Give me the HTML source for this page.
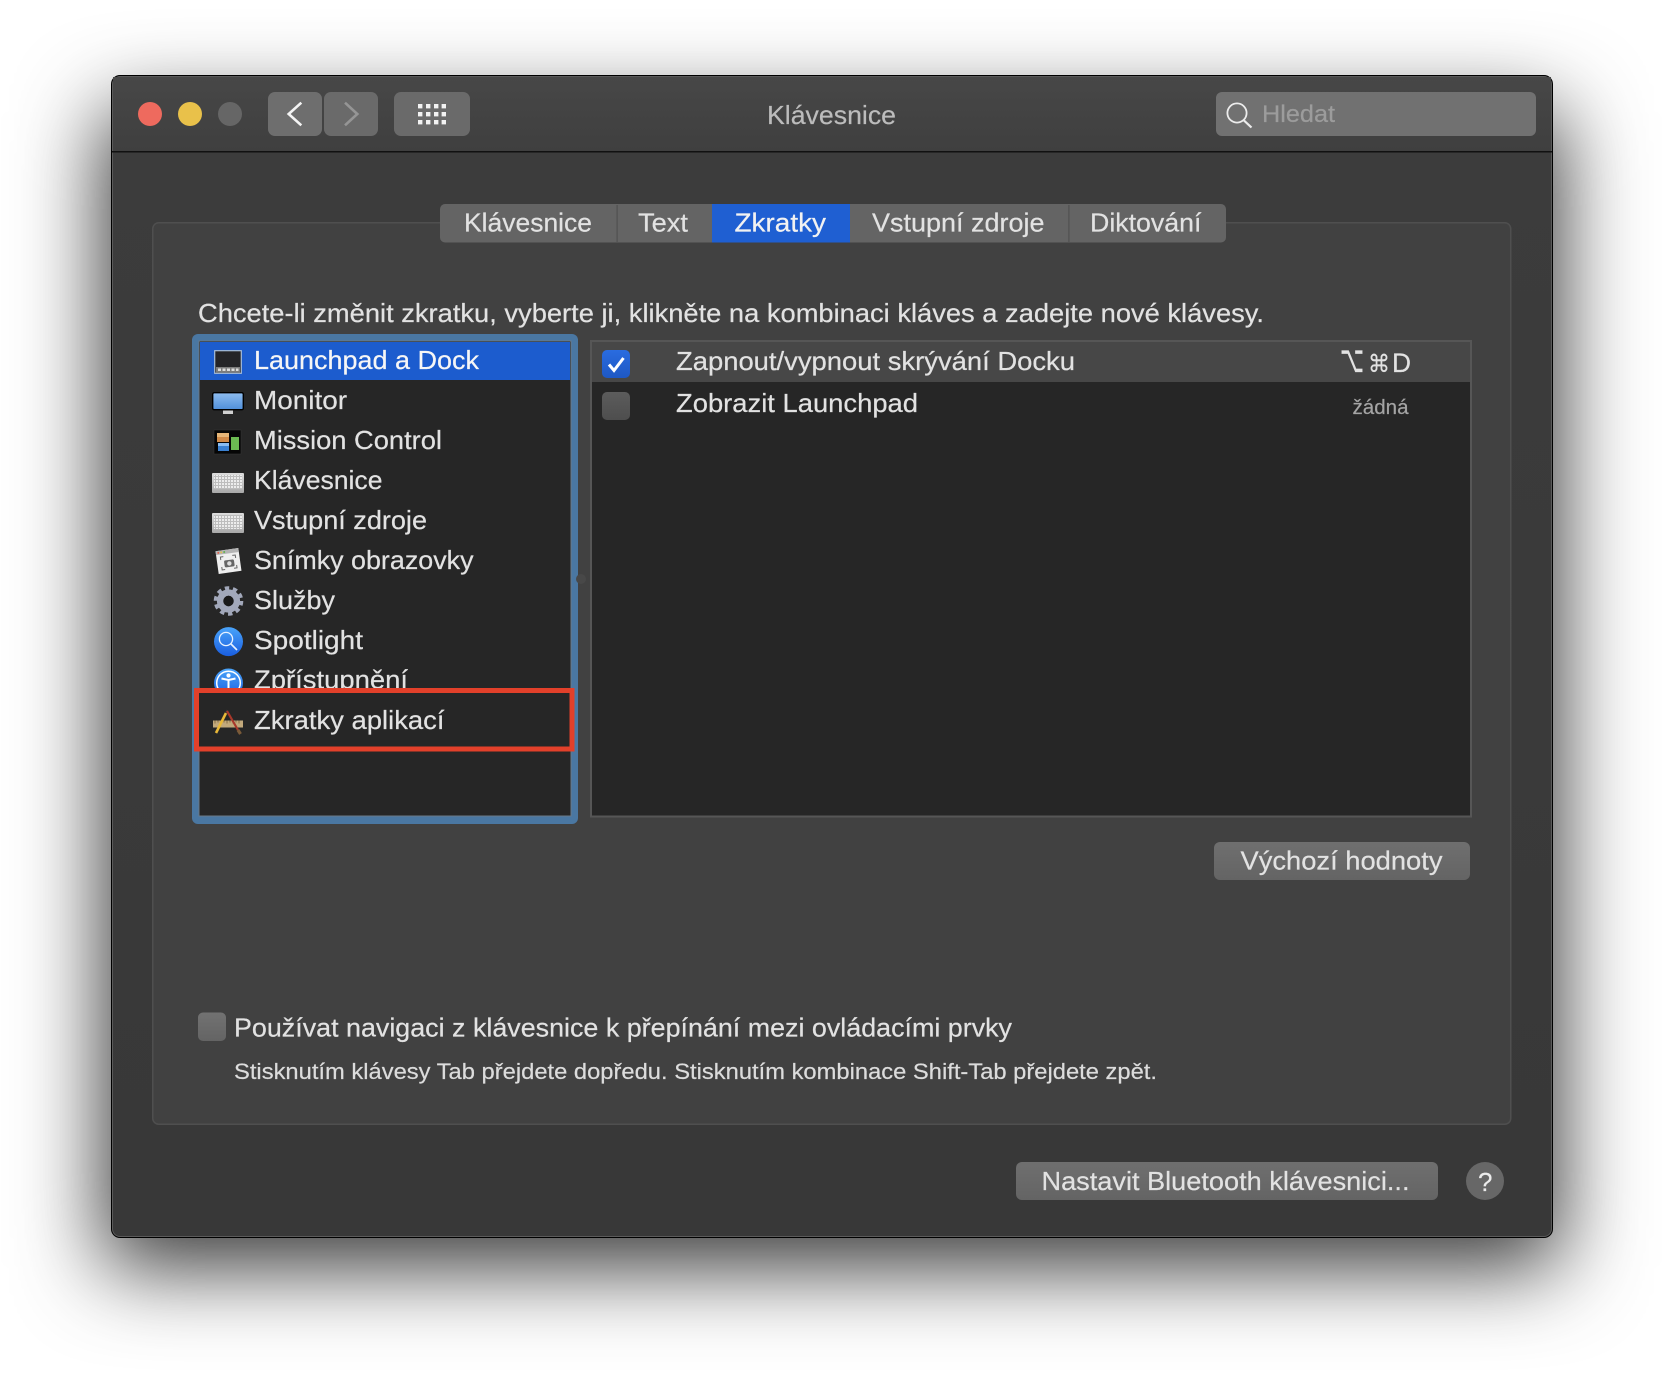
<!DOCTYPE html>
<html lang="cs">
<head>
<meta charset="utf-8">
<title>Klávesnice</title>
<style>
html,body{margin:0;padding:0;background:#fff;width:1664px;height:1386px;overflow:hidden}
#sh{position:absolute;left:-2897px;top:111px;width:1457px;height:1157px;border-radius:10px;box-shadow:3000px 0 85px rgba(0,0,0,.78)}
svg{position:absolute;left:0;top:0}
text{font-family:"Liberation Sans",sans-serif;font-size:26px;fill:#e2e2e2;stroke:#e2e2e2;stroke-width:.2}
</style>
</head>
<body>
<div id="sh"></div>
<svg width="1664" height="1386" viewBox="0 0 1664 1386" xmlns="http://www.w3.org/2000/svg">
<defs>
<linearGradient id="tb" x1="0" y1="0" x2="0" y2="1"><stop offset="0" stop-color="#474747"/><stop offset="1" stop-color="#3f3f3f"/></linearGradient>
<linearGradient id="bd" x1="0" y1="0" x2="0" y2="1"><stop offset="0" stop-color="#3c3c3c"/><stop offset="1" stop-color="#383838"/></linearGradient>
<linearGradient id="btn" x1="0" y1="0" x2="0" y2="1"><stop offset="0" stop-color="#6f6f6f"/><stop offset="1" stop-color="#646464"/></linearGradient>
<linearGradient id="chk" x1="0" y1="0" x2="0" y2="1"><stop offset="0" stop-color="#2a6ce0"/><stop offset="1" stop-color="#1e58c4"/></linearGradient>
<linearGradient id="off" x1="0" y1="0" x2="0" y2="1"><stop offset="0" stop-color="#5c5c5c"/><stop offset="1" stop-color="#4e4e4e"/></linearGradient>
<linearGradient id="off2" x1="0" y1="0" x2="0" y2="1"><stop offset="0" stop-color="#727272"/><stop offset="1" stop-color="#646464"/></linearGradient>
<linearGradient id="mon" x1="0" y1="0" x2="0" y2="1"><stop offset="0" stop-color="#8fbdf0"/><stop offset="1" stop-color="#4f8fda"/></linearGradient>
<linearGradient id="key" x1="0" y1="0" x2="0" y2="1"><stop offset="0" stop-color="#dcdcdc"/><stop offset="1" stop-color="#a8a8a8"/></linearGradient>
<linearGradient id="sp" x1="0" y1="0" x2="0" y2="1"><stop offset="0" stop-color="#4aa4fa"/><stop offset="1" stop-color="#1a5ee0"/></linearGradient>
<pattern id="keys" width="3" height="3" patternUnits="userSpaceOnUse"><rect width="3" height="3" fill="#bdbdbd"/><rect width="2" height="2" fill="#ececec"/></pattern>
</defs>

<!-- window -->
<rect x="111" y="75" width="1442" height="1163" rx="9" fill="#000"/>
<rect x="112" y="76" width="1440" height="1161" rx="8" fill="#5a5a5a"/>
<rect x="113" y="77" width="1438" height="1159" rx="7" fill="url(#bd)"/>
<rect x="113" y="77" width="1438" height="74" fill="url(#tb)"/>
<rect x="112" y="151" width="1440" height="1.5" fill="#111"/>

<!-- traffic lights -->
<circle cx="150" cy="114" r="12" fill="#ee6a5e"/>
<circle cx="190" cy="114" r="12" fill="#e9c14a"/>
<circle cx="230" cy="114" r="12" fill="#666"/>

<!-- nav -->
<rect x="268" y="92" width="54" height="44" rx="7" fill="#6e6e6e"/>
<rect x="324" y="92" width="54" height="44" rx="7" fill="#6a6a6a"/>
<path d="M301.3 102.7L288.7 114L301.3 125.3" fill="none" stroke="#f4f4f4" stroke-width="2.6"/>
<path d="M345 102.7L357.3 114L345 125.3" fill="none" stroke="#959595" stroke-width="2.6"/>
<rect x="394" y="92" width="76" height="44" rx="7" fill="#6a6a6a"/>
<g fill="#f2f2f2">
<rect x="418" y="104" width="4.4" height="4.4"/><rect x="426" y="104" width="4.4" height="4.4"/><rect x="434" y="104" width="4.4" height="4.4"/><rect x="441.6" y="104" width="4.4" height="4.4"/>
<rect x="418" y="112" width="4.4" height="4.4"/><rect x="426" y="112" width="4.4" height="4.4"/><rect x="434" y="112" width="4.4" height="4.4"/><rect x="441.6" y="112" width="4.4" height="4.4"/>
<rect x="418" y="120" width="4.4" height="4.4"/><rect x="426" y="120" width="4.4" height="4.4"/><rect x="434" y="120" width="4.4" height="4.4"/><rect x="441.6" y="120" width="4.4" height="4.4"/>
</g>

<text x="767" y="124" textLength="129" lengthAdjust="spacingAndGlyphs" style="fill:#bcbcbc;stroke:#bcbcbc">Klávesnice</text>

<!-- search -->
<rect x="1216" y="92" width="320" height="44" rx="6" fill="#717171"/>
<circle cx="1237" cy="113" r="9.6" fill="none" stroke="#ececec" stroke-width="1.8"/>
<path d="M1244 120.5L1251.5 127.5" stroke="#ececec" stroke-width="2.2" fill="none"/>
<text x="1262" y="122" textLength="73" lengthAdjust="spacingAndGlyphs" style="font-size:24px;fill:#9c9c9c;stroke:#9c9c9c">Hledat</text>

<!-- group box -->
<rect x="152.75" y="222.75" width="1358" height="901.5" rx="6" fill="#414141" stroke="#4f4f4f" stroke-width="1.5"/>

<!-- tabs -->
<rect x="440" y="204" width="786" height="38.5" rx="5" fill="#646464"/>
<rect x="712" y="204" width="138" height="38.5" fill="#1f5fd2"/>
<rect x="616.5" y="205" width="1.2" height="37" fill="#505050"/>
<rect x="1068.3" y="205" width="1.2" height="37" fill="#505050"/>
<text x="464" y="231.5" textLength="128" lengthAdjust="spacingAndGlyphs">Klávesnice</text>
<text x="638" y="231.5" textLength="50" lengthAdjust="spacingAndGlyphs">Text</text>
<text x="734.5" y="231.5" textLength="91.5" lengthAdjust="spacingAndGlyphs" style="fill:#f2f2f2;stroke:#f2f2f2">Zkratky</text>
<text x="872" y="231.5" textLength="172.5" lengthAdjust="spacingAndGlyphs">Vstupní zdroje</text>
<text x="1090" y="231.5" textLength="111.5" lengthAdjust="spacingAndGlyphs">Diktování</text>

<text x="198" y="322" textLength="1066" lengthAdjust="spacingAndGlyphs">Chcete-li změnit zkratku, vyberte ji, klikněte na kombinaci kláves a zadejte nové klávesy.</text>

<!-- left list -->
<rect x="192" y="334" width="386" height="490" rx="6" fill="#4a77a2"/>
<rect x="199" y="341" width="372" height="475" fill="#262626" stroke="#6a7a88" stroke-width="1"/>
<rect x="200" y="342" width="370" height="38" fill="#1c5cce"/>

<g>
<text x="254" y="369" textLength="225" lengthAdjust="spacingAndGlyphs" style="fill:#f6f6f6;stroke:#f6f6f6">Launchpad a Dock</text>
<text x="254" y="409" textLength="93" lengthAdjust="spacingAndGlyphs">Monitor</text>
<text x="254" y="449" textLength="188" lengthAdjust="spacingAndGlyphs">Mission Control</text>
<text x="254" y="489" textLength="128.5" lengthAdjust="spacingAndGlyphs">Klávesnice</text>
<text x="254" y="529" textLength="173" lengthAdjust="spacingAndGlyphs">Vstupní zdroje</text>
<text x="254" y="569" textLength="219.5" lengthAdjust="spacingAndGlyphs">Snímky obrazovky</text>
<text x="254" y="609" textLength="81" lengthAdjust="spacingAndGlyphs">Služby</text>
<text x="254" y="649" textLength="109" lengthAdjust="spacingAndGlyphs">Spotlight</text>
<text x="254" y="688.5" textLength="154" lengthAdjust="spacingAndGlyphs">Zpřístupnění</text>
</g>

<!-- icons -->
<g>
<rect x="214.7" y="350.7" width="26.6" height="22.6" fill="#242427" stroke="#a9bdd6" stroke-width="1.2"/>
<rect x="216" y="367" width="24" height="5.5" fill="#7c7c7c"/>
<g fill="#ddd"><rect x="218" y="368.5" width="3" height="2.5"/><rect x="222.5" y="368.5" width="3" height="2.5"/><rect x="227" y="368.5" width="3" height="2.5"/><rect x="231.5" y="368.5" width="3" height="2.5"/><rect x="236" y="368.5" width="2.5" height="2.5"/></g>

<rect x="212.7" y="392.7" width="30.6" height="17" rx="1.5" fill="url(#mon)" stroke="#000" stroke-width="1.4"/>
<rect x="223" y="410.5" width="10" height="3.5" fill="#d0d0d0"/>

<rect x="214" y="430" width="27" height="24" fill="#060606" stroke="#333" stroke-width=".6"/>
<rect x="217" y="433" width="12" height="4" fill="#e6b678"/><rect x="217" y="437" width="12" height="5" fill="#d08a48"/>
<rect x="218" y="443" width="11" height="3" fill="#8abcf0"/><rect x="218" y="446" width="11" height="5" fill="#3a80d0"/>
<rect x="231" y="437" width="8" height="13" fill="#6cbb52"/>

<rect x="212" y="473" width="32" height="20" rx="1" fill="url(#key)"/>
<rect x="214" y="475" width="28" height="14" fill="url(#keys)"/>
<rect x="212" y="513" width="32" height="20" rx="1" fill="url(#key)"/>
<rect x="214" y="515" width="28" height="14" fill="url(#keys)"/>

<g transform="rotate(-8 228.5 561)">
<rect x="217" y="549.5" width="23" height="23" fill="#efefef"/>
<rect x="217" y="549.5" width="23" height="4" fill="#b4b4b4"/>
<circle cx="219.5" cy="551.5" r="1" fill="#e0604e"/><circle cx="222.5" cy="551.5" r="1" fill="#e0c04e"/><circle cx="225.5" cy="551.5" r="1" fill="#60b050"/>
<rect x="224" y="560" width="10" height="7" rx="1.5" fill="#666"/><circle cx="229" cy="563.5" r="2.2" fill="#ddd"/>
<path d="M221 559v-3h3M236 559v-3h-3M221 566v3h3M236 566v3h-3" fill="none" stroke="#666" stroke-width="1"/>
</g>

<circle cx="228.5" cy="601" r="12.7" fill="none" stroke="#a2a8ba" stroke-width="4.2" stroke-dasharray="4.3 3.68"/>
<circle cx="228.5" cy="601" r="8.4" fill="none" stroke="#a2a8ba" stroke-width="6.4"/>
<circle cx="228.5" cy="601" r="5.2" fill="#1a1a1a"/>

<circle cx="228.5" cy="641.6" r="14.5" fill="url(#sp)"/>
<circle cx="226" cy="639" r="6.6" fill="none" stroke="#e8f2ff" stroke-width="1.3"/>
<path d="M231 644L237 650" stroke="#e8f2ff" stroke-width="1.6"/>

<circle cx="228.5" cy="683" r="14.5" fill="url(#sp)"/>
<circle cx="228.5" cy="683" r="11.8" fill="none" stroke="#fff" stroke-width="1.5"/>
<circle cx="228.5" cy="675.5" r="2.1" fill="#fff"/>
<path d="M221.5 678.5L228.5 680L235.5 678.5M228.5 680V688" fill="none" stroke="#fff" stroke-width="2"/>
</g>

<!-- red highlight box -->
<rect x="196.5" y="690.5" width="375.5" height="58.5" fill="#262626" stroke="#e2402a" stroke-width="5"/>

<text x="254" y="729" textLength="190.5" lengthAdjust="spacingAndGlyphs">Zkratky aplikací</text>

<!-- tools icon -->
<rect x="213" y="720.5" width="30" height="7" fill="#c2a97c"/>
<path d="M215 720.5v3M218 720.5v2M221 720.5v3M224 720.5v2M227 720.5v3M230 720.5v2M233 720.5v3M236 720.5v2M239 720.5v3" stroke="#7a6238" stroke-width=".8"/>
<path d="M216 733L226 713" stroke="#e9b838" stroke-width="2.6"/>
<path d="M226 713L227.5 710" stroke="#333" stroke-width="2.2"/>
<path d="M227 711L238 730" stroke="#a8382a" stroke-width="2.2"/>
<path d="M238 730L240.5 734" stroke="#7a5a38" stroke-width="3.2"/>

<!-- sash dimple -->
<circle cx="581" cy="579" r="5" fill="#484848"/>

<!-- right table -->
<rect x="591" y="341" width="880" height="475.5" fill="#262626" stroke="#565656" stroke-width="2"/>
<rect x="592" y="342" width="878" height="40" fill="#474747"/>

<rect x="602" y="350" width="28" height="28" rx="5" fill="url(#chk)"/>
<path d="M609 364.5L614 370.5L623.5 358" fill="none" stroke="#fff" stroke-width="3"/>
<rect x="602" y="392" width="28" height="28" rx="5" fill="url(#off)"/>

<text x="676" y="370" textLength="399" lengthAdjust="spacingAndGlyphs">Zapnout/vypnout skrývání Docku</text>
<text x="676" y="412" textLength="242" lengthAdjust="spacingAndGlyphs">Zobrazit Launchpad</text>

<text transform="translate(1340 372) scale(1 1.55)" textLength="24" lengthAdjust="spacingAndGlyphs" style="font-family:'DejaVu Sans',sans-serif;font-size:24px">⌥</text>
<text x="1368" y="372" textLength="22" lengthAdjust="spacingAndGlyphs" style="font-family:'DejaVu Sans',sans-serif;font-size:24px">⌘</text>
<text x="1392" y="372" textLength="19" lengthAdjust="spacingAndGlyphs" style="font-size:27px">D</text>
<text x="1352.5" y="414" textLength="56" lengthAdjust="spacingAndGlyphs" style="font-size:20px;fill:#a4a4a4;stroke:#a4a4a4">žádná</text>

<!-- defaults button -->
<rect x="1214" y="842" width="256" height="38" rx="6" fill="url(#btn)"/>
<text x="1240.5" y="869.5" textLength="202" lengthAdjust="spacingAndGlyphs">Výchozí hodnoty</text>

<!-- keyboard nav -->
<rect x="198" y="1012.5" width="28" height="28.5" rx="5" fill="url(#off2)"/>
<text x="234" y="1036.7" textLength="778" lengthAdjust="spacingAndGlyphs">Používat navigaci z klávesnice k přepínání mezi ovládacími prvky</text>
<text x="234" y="1079" textLength="923" lengthAdjust="spacingAndGlyphs" style="font-size:22px;fill:#dcdcdc;stroke:#dcdcdc">Stisknutím klávesy Tab přejdete dopředu. Stisknutím kombinace Shift-Tab přejdete zpět.</text>

<!-- bottom buttons -->
<rect x="1016" y="1162" width="422" height="38" rx="6" fill="url(#btn)"/>
<text x="1041.5" y="1190" textLength="368" lengthAdjust="spacingAndGlyphs">Nastavit Bluetooth klávesnici...</text>
<circle cx="1485" cy="1181" r="19" fill="#676767"/>
<text x="1478" y="1191" style="fill:#ececec">?</text>
</svg>
</body>
</html>
